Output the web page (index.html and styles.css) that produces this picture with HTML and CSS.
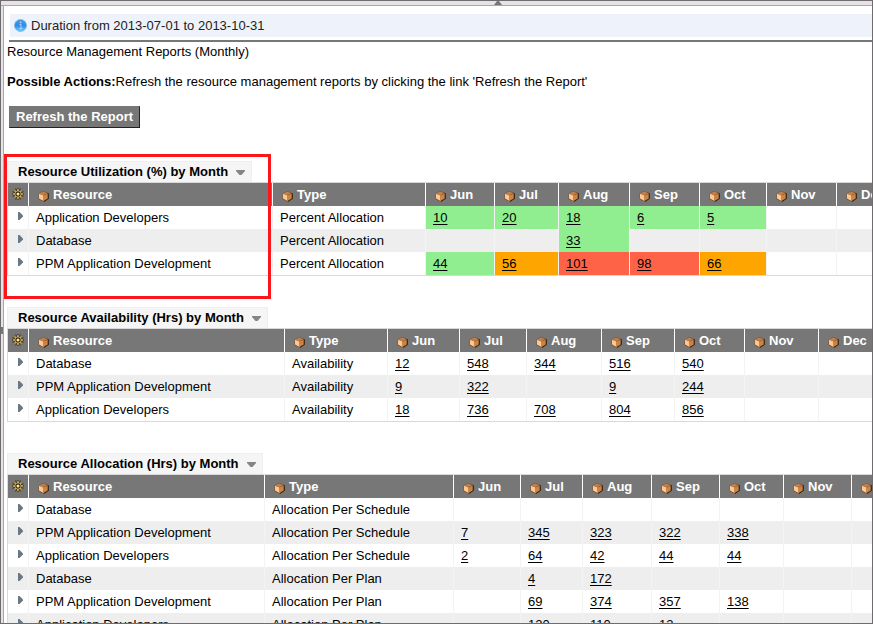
FILE: index.html
```html
<!DOCTYPE html>
<html lang="en">
<head>
<meta charset="utf-8">
<title>Resource Management Reports</title>
<link rel="stylesheet" href="styles.css">
</head>
<body>
<svg class="defs" aria-hidden="true">
  <symbol id="cube" viewBox="0 0 11 11">
    <path d="M5 0 10 1.8 10.6 2.4V7.6L6 10.6H5L.6 8.2V2.4z" fill="#7a4c26"/>
    <path d="M10 2 10.8 2.6V7.8L6 11V10z" fill="#33200f"/>
    <path d="M5.2.6 9.4 2.2 5.3 4.2 1 2.6z" fill="#bd8050"/>
    <path d="M1 2.8 5.5 4.6V10L1 7.6z" fill="#ffc890"/>
    <path d="M5.5 4.6 9.7 2.7V7.4L5.5 10z" fill="#c98548"/>
  </symbol>
  <symbol id="gear" viewBox="0 0 12 12">
    <path d="M6 0V12M0 6H12M1.8 1.8 10.2 10.2M10.2 1.8 1.8 10.2M3.7.5 8.3 11.5M8.3.5 3.7 11.5M.5 3.7 11.5 8.3M.5 8.3 11.5 3.7" stroke="#33290f" stroke-width="1"/>
    <circle cx="6" cy="6" r="3.2" fill="#2c240e" stroke="#d9ac48" stroke-width="1"/>
    <path d="M6 1V3M6 9V11M1 6H3M9 6H11M2.4 2.4 3.6 3.6M8.4 8.4 9.6 9.6M9.6 2.4 8.4 3.6M3.6 8.4 2.4 9.6" stroke="#f5cf70" stroke-width="1"/>
    <circle cx="6" cy="6" r="1.5" fill="#ffe9a8"/>
  </symbol>
  <symbol id="tri" viewBox="0 0 5 8"><path d="M0 0H1.5L5 3.5V4.5L1.5 8H0z" fill="#687887"/></symbol>
  <symbol id="caret" viewBox="0 0 9 5"><path d="M0 0H9V1L5.5 5H3.5L0 1z" fill="#858585"/></symbol>
</svg>
<div class="window">
  <div class="sash-top"><svg class="sash-arrow" viewBox="0 0 8 4"><path d="M3 0H5L8 4H0z" fill="#777"/></svg></div>
  <div class="body-row">
    <div class="sash-left"><span class="sash-mark"></span></div>
    <main class="content">
      <div class="banner">
        <svg class="info" viewBox="0 0 13 13">
          <defs><linearGradient id="g" x2="0" y2="1"><stop offset="0" stop-color="#4a9be6"/><stop offset=".5" stop-color="#2e8bea"/><stop offset="1" stop-color="#6fd0ff"/></linearGradient></defs>
          <circle cx="6.5" cy="6.5" r="6" fill="url(#g)" stroke="#75b2e8" stroke-width=".8"/>
          <path d="M5.5 5.5H7V9.5M5.2 9.6H8.4" stroke="#a9d8fb" stroke-width="1" fill="none"/><circle cx="6.6" cy="3.4" r=".9" fill="#a9d8fb"/>
        </svg>
        <span>Duration from 2013-07-01 to 2013-10-31</span>
      </div>
      <div class="intro">
        <p>Resource Management Reports (Monthly)</p>
        <p><b>Possible Actions:</b>Refresh the resource management reports by clicking the link 'Refresh the Report'</p>
        <button class="refresh" type="button">Refresh the Report</button>
      </div>

      <section class="report utilization">
        <button class="title" type="button">Resource Utilization (%) by Month <svg><use href="#caret"/></svg></button>
        <table>
          <colgroup><col><col><col><col><col><col><col><col><col><col></colgroup>
          <thead><tr>
            <th class="tool"><svg class="gear"><use href="#gear"/></svg></th>
            <th><svg class="cube"><use href="#cube"/></svg>Resource</th>
            <th><svg class="cube"><use href="#cube"/></svg>Type</th>
            <th><svg class="cube"><use href="#cube"/></svg>Jun</th>
            <th><svg class="cube"><use href="#cube"/></svg>Jul</th>
            <th><svg class="cube"><use href="#cube"/></svg>Aug</th>
            <th><svg class="cube"><use href="#cube"/></svg>Sep</th>
            <th><svg class="cube"><use href="#cube"/></svg>Oct</th>
            <th><svg class="cube"><use href="#cube"/></svg>Nov</th>
            <th><svg class="cube"><use href="#cube"/></svg>Dec</th>
          </tr></thead>
          <tbody>
            <tr><td class="tool"><button class="expand" type="button" aria-label="Expand"><svg><use href="#tri"/></svg></button></td><td>Application Developers</td><td>Percent Allocation</td><td class="ok"><a href="#">10</a></td><td class="ok"><a href="#">20</a></td><td class="ok"><a href="#">18</a></td><td class="ok"><a href="#">6</a></td><td class="ok"><a href="#">5</a></td><td></td><td></td></tr>
            <tr><td class="tool"><button class="expand" type="button" aria-label="Expand"><svg><use href="#tri"/></svg></button></td><td>Database</td><td>Percent Allocation</td><td></td><td></td><td class="ok"><a href="#">33</a></td><td></td><td></td><td></td><td></td></tr>
            <tr><td class="tool"><button class="expand" type="button" aria-label="Expand"><svg><use href="#tri"/></svg></button></td><td>PPM Application Development</td><td>Percent Allocation</td><td class="ok"><a href="#">44</a></td><td class="warn"><a href="#">56</a></td><td class="over"><a href="#">101</a></td><td class="over"><a href="#">98</a></td><td class="warn"><a href="#">66</a></td><td></td><td></td></tr>
          </tbody>
        </table>
        <div class="highlight"></div>
      </section>

      <section class="report availability">
        <button class="title" type="button">Resource Availability (Hrs) by Month <svg><use href="#caret"/></svg></button>
        <table>
          <colgroup><col><col><col><col><col><col><col><col><col><col></colgroup>
          <thead><tr>
            <th class="tool"><svg class="gear"><use href="#gear"/></svg></th>
            <th><svg class="cube"><use href="#cube"/></svg>Resource</th>
            <th><svg class="cube"><use href="#cube"/></svg>Type</th>
            <th><svg class="cube"><use href="#cube"/></svg>Jun</th>
            <th><svg class="cube"><use href="#cube"/></svg>Jul</th>
            <th><svg class="cube"><use href="#cube"/></svg>Aug</th>
            <th><svg class="cube"><use href="#cube"/></svg>Sep</th>
            <th><svg class="cube"><use href="#cube"/></svg>Oct</th>
            <th><svg class="cube"><use href="#cube"/></svg>Nov</th>
            <th><svg class="cube"><use href="#cube"/></svg>Dec</th>
          </tr></thead>
          <tbody>
            <tr><td class="tool"><button class="expand" type="button" aria-label="Expand"><svg><use href="#tri"/></svg></button></td><td>Database</td><td>Availability</td><td><a href="#">12</a></td><td><a href="#">548</a></td><td><a href="#">344</a></td><td><a href="#">516</a></td><td><a href="#">540</a></td><td></td><td></td></tr>
            <tr><td class="tool"><button class="expand" type="button" aria-label="Expand"><svg><use href="#tri"/></svg></button></td><td>PPM Application Development</td><td>Availability</td><td><a href="#">9</a></td><td><a href="#">322</a></td><td></td><td><a href="#">9</a></td><td><a href="#">244</a></td><td></td><td></td></tr>
            <tr><td class="tool"><button class="expand" type="button" aria-label="Expand"><svg><use href="#tri"/></svg></button></td><td>Application Developers</td><td>Availability</td><td><a href="#">18</a></td><td><a href="#">736</a></td><td><a href="#">708</a></td><td><a href="#">804</a></td><td><a href="#">856</a></td><td></td><td></td></tr>
          </tbody>
        </table>
      </section>

      <section class="report allocation">
        <button class="title" type="button">Resource Allocation (Hrs) by Month <svg><use href="#caret"/></svg></button>
        <table>
          <colgroup><col><col><col><col><col><col><col><col><col><col></colgroup>
          <thead><tr>
            <th class="tool"><svg class="gear"><use href="#gear"/></svg></th>
            <th><svg class="cube"><use href="#cube"/></svg>Resource</th>
            <th><svg class="cube"><use href="#cube"/></svg>Type</th>
            <th><svg class="cube"><use href="#cube"/></svg>Jun</th>
            <th><svg class="cube"><use href="#cube"/></svg>Jul</th>
            <th><svg class="cube"><use href="#cube"/></svg>Aug</th>
            <th><svg class="cube"><use href="#cube"/></svg>Sep</th>
            <th><svg class="cube"><use href="#cube"/></svg>Oct</th>
            <th><svg class="cube"><use href="#cube"/></svg>Nov</th>
            <th><svg class="cube"><use href="#cube"/></svg></th>
          </tr></thead>
          <tbody>
            <tr><td class="tool"><button class="expand" type="button" aria-label="Expand"><svg><use href="#tri"/></svg></button></td><td>Database</td><td>Allocation Per Schedule</td><td></td><td></td><td></td><td></td><td></td><td></td><td></td></tr>
            <tr><td class="tool"><button class="expand" type="button" aria-label="Expand"><svg><use href="#tri"/></svg></button></td><td>PPM Application Development</td><td>Allocation Per Schedule</td><td><a href="#">7</a></td><td><a href="#">345</a></td><td><a href="#">323</a></td><td><a href="#">322</a></td><td><a href="#">338</a></td><td></td><td></td></tr>
            <tr><td class="tool"><button class="expand" type="button" aria-label="Expand"><svg><use href="#tri"/></svg></button></td><td>Application Developers</td><td>Allocation Per Schedule</td><td><a href="#">2</a></td><td><a href="#">64</a></td><td><a href="#">42</a></td><td><a href="#">44</a></td><td><a href="#">44</a></td><td></td><td></td></tr>
            <tr><td class="tool"><button class="expand" type="button" aria-label="Expand"><svg><use href="#tri"/></svg></button></td><td>Database</td><td>Allocation Per Plan</td><td></td><td><a href="#">4</a></td><td><a href="#">172</a></td><td></td><td></td><td></td><td></td></tr>
            <tr><td class="tool"><button class="expand" type="button" aria-label="Expand"><svg><use href="#tri"/></svg></button></td><td>PPM Application Development</td><td>Allocation Per Plan</td><td></td><td><a href="#">69</a></td><td><a href="#">374</a></td><td><a href="#">357</a></td><td><a href="#">138</a></td><td></td><td></td></tr>
            <tr><td class="tool"><button class="expand" type="button" aria-label="Expand"><svg><use href="#tri"/></svg></button></td><td>Application Developers</td><td>Allocation Per Plan</td><td></td><td><a href="#">120</a></td><td><a href="#">110</a></td><td><a href="#">12</a></td><td></td><td></td><td></td></tr>
          </tbody>
        </table>
      </section>
    </main>
  </div>
</div>
</body>
</html>
```
FILE: styles.css
```css
* { box-sizing: border-box; }

body {
  margin: 0;
  font: 13px/16px "Liberation Sans", Arial, sans-serif;
  color: #000;
  background: #fff;
}

button { font: inherit; color: inherit; }

.defs { position: absolute; width: 0; height: 0; }

.window {
  display: flex;
  flex-direction: column;
  height: 100vh;
  border: 1px solid #6e6c6e;
  overflow: hidden;
}

.sash-top {
  flex: none;
  display: flex;
  justify-content: center;
  padding-left: 122px;
  height: 5px;
  background: #e7e2e5;
  border-bottom: 1px solid #aaa7a9;
}

.sash-arrow { width: 8px; height: 4px; }

.body-row { flex: 1; display: flex; min-height: 0; }

.sash-left {
  flex: none;
  display: flex;
  align-items: center;
  width: 3px;
  background: #e7e2e5;
  border-right: 1px solid #a9a6a8;
}

.sash-mark { width: 2px; height: 7px; margin-top: 32px; background: #777; }

.content { flex: 1; min-width: 0; padding: 8px 0 0 3px; overflow: hidden; }

.banner {
  display: flex;
  align-items: center;
  gap: 4px;
  height: 23px;
  margin-left: 3px;
  padding-left: 4px;
  background: #eef3fb;
  color: #222;
}

.info { width: 13px; height: 13px; }

.intro { padding-top: 3px; }

.intro::before {
  content: "";
  display: block;
  height: 2px;
  margin: 0 0 2px 2px;
  background: #777;
}

.intro p { margin: 0 0 14px; white-space: nowrap; }

.refresh {
  display: block;
  height: 22px;
  margin: 16px 0 0 2px;
  padding: 0 6px;
  border: 1px solid #777;
  border-right-color: #222;
  border-bottom-color: #222;
  background: #777;
  color: #fff;
  font-weight: bold;
}

.report { position: relative; margin-bottom: 31px; }
.intro + .report { margin-top: 33px; }

.title {
  display: flex;
  align-items: center;
  gap: 8px;
  height: 21px;
  padding: 0 6px 0 10px;
  border: 1px solid #efefef;
  border-bottom: 0;
  background: #f5f5f5;
  font-weight: bold;
  white-space: nowrap;
}

.title svg { width: 9px; height: 5px; margin-top: 1px; }

table {
  table-layout: fixed;
  width: 910px;
  border-collapse: separate;
  border-spacing: 0;
  border: 1px solid #d9d9d9;
}

th, td {
  height: 23px;
  padding: 0 7px;
  border-right: 1px solid #f3f3f3;
  text-align: left;
  white-space: nowrap;
}

th {
  padding: 0 9px;
  background: #777;
  border-right-color: #fff;
  color: #fff;
}

tbody tr:nth-child(even) { background: #eee; }

.tool { padding: 0; text-align: center; }

.cube { width: 11px; height: 11px; margin-right: 4px; vertical-align: -3px; }
.gear { display: block; width: 12px; height: 12px; margin: 0 0 2px 4px; }

.expand {
  display: block;
  margin: 0 0 3px 10px;
  padding: 0;
  border: 0;
  background: none;
}

.expand svg { display: block; width: 5px; height: 8px; }

td a { color: #000; text-underline-offset: 2px; }

.ok { background: #90ee90; }
.warn { background: #ffa500; }
.over { background: #ff6347; }

.highlight {
  position: absolute;
  top: -7px;
  left: -3px;
  width: 267px;
  height: 145px;
  border: 3px solid #fb161b;
  pointer-events: none;
}

col:nth-child(1) { width: 21px; }

.utilization col:nth-child(2) { width: 244px; }
.utilization col:nth-child(3) { width: 153px; }
.utilization col:nth-child(4) { width: 69px; }
.utilization col:nth-child(5) { width: 64px; }
.utilization col:nth-child(6) { width: 71px; }
.utilization col:nth-child(7) { width: 70px; }
.utilization col:nth-child(8) { width: 67px; }
.utilization col:nth-child(9) { width: 70px; }

.availability col:nth-child(2) { width: 256px; }
.availability col:nth-child(3) { width: 103px; }
.availability col:nth-child(4) { width: 72px; }
.availability col:nth-child(5) { width: 67px; }
.availability col:nth-child(6) { width: 75px; }
.availability col:nth-child(7) { width: 73px; }
.availability col:nth-child(8) { width: 70px; }
.availability col:nth-child(9) { width: 74px; }

.allocation col:nth-child(2) { width: 236px; }
.allocation col:nth-child(3) { width: 189px; }
.allocation col:nth-child(4) { width: 67px; }
.allocation col:nth-child(5) { width: 62px; }
.allocation col:nth-child(6) { width: 69px; }
.allocation col:nth-child(7) { width: 68px; }
.allocation col:nth-child(8) { width: 64px; }
.allocation col:nth-child(9) { width: 68px; }
```
